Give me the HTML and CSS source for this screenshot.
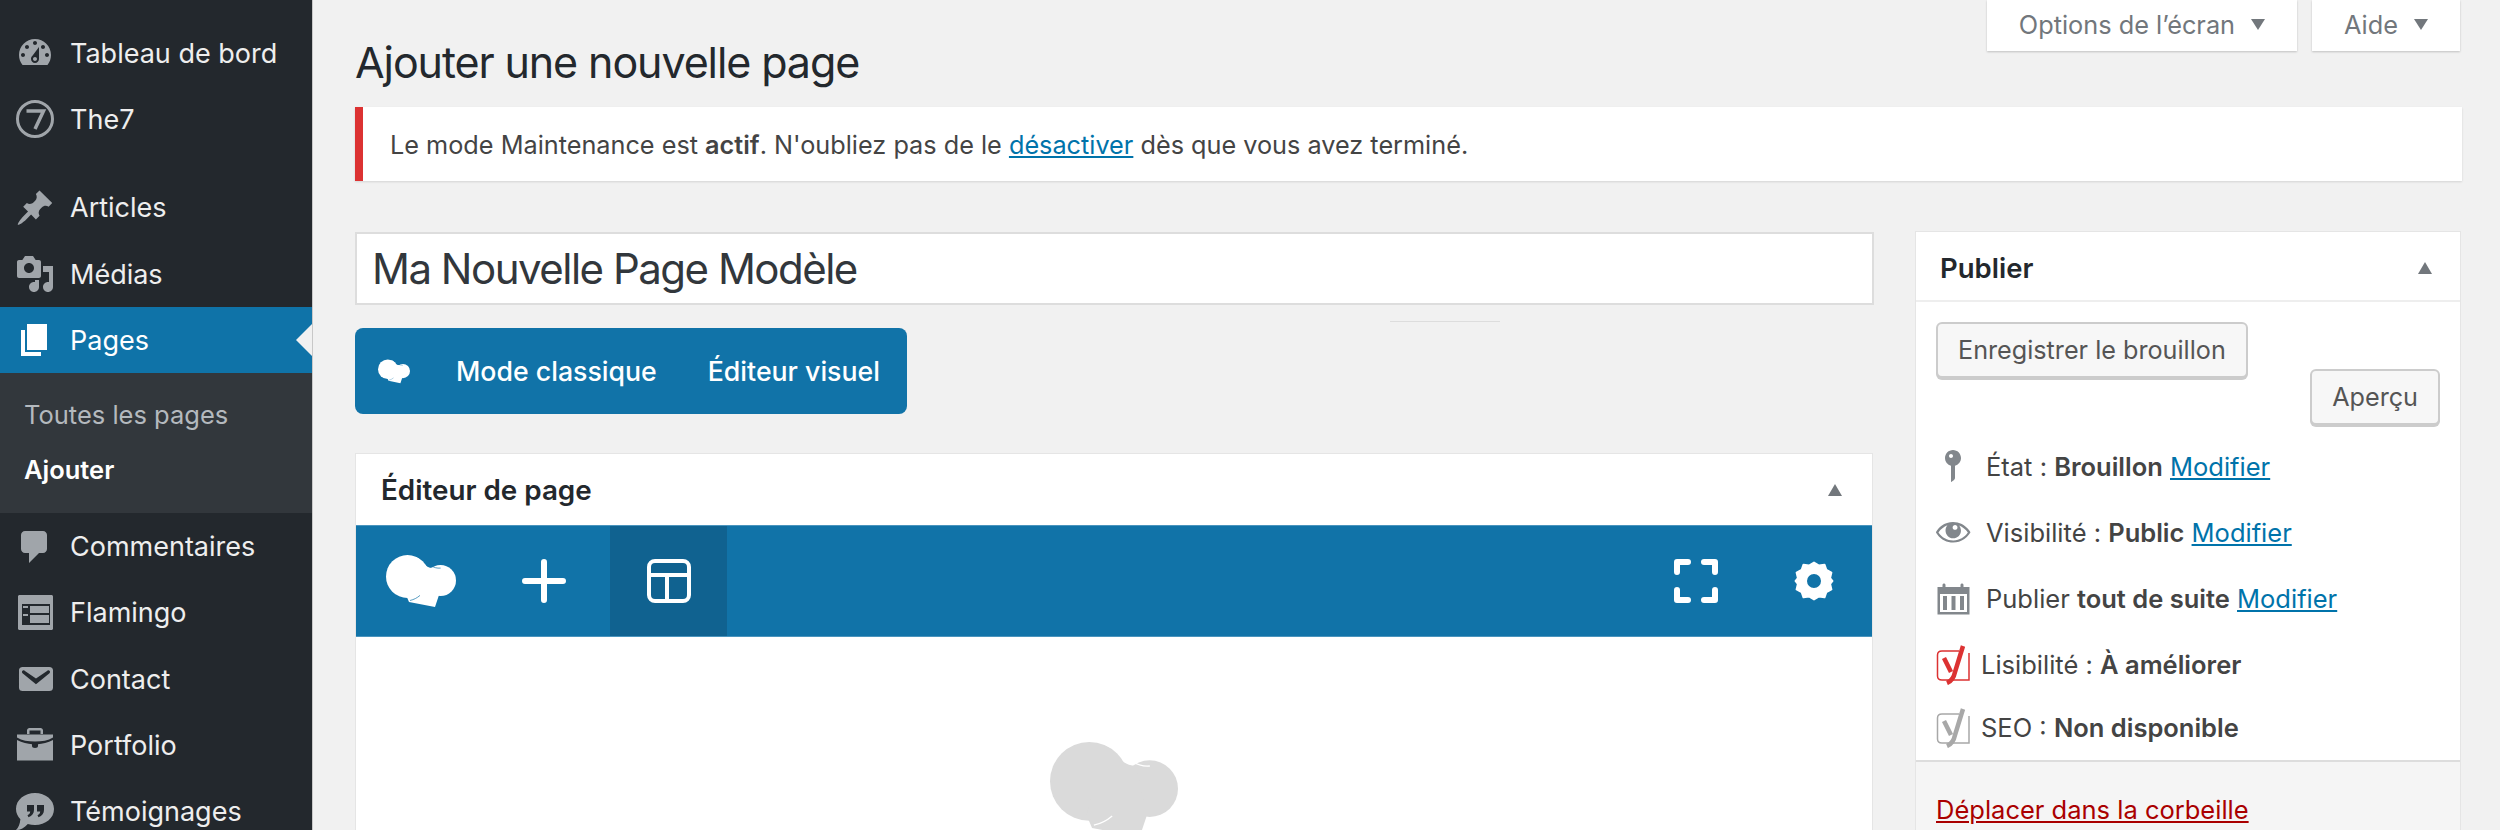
FILE: index.html
```html
<!DOCTYPE html>
<html lang="fr">
<head>
    <meta charset="UTF-8">
    <title>Ajouter une nouvelle page</title>
    <link rel="stylesheet" href="styles.css">
</head>
<body>
    <svg class="defs" width="0" height="0">
        <symbol id="hat" viewBox="0 0 70 53">
            <circle cx="21.5" cy="21.5" r="21.5"/>
            <circle cx="54.5" cy="25.5" r="15.5"/>
            <path d="M30 2C37 5 38 13 47 13L53 40L49 52L23 47L20 40Z"/>
            <path class="notch" d="M45.5 10.8C48 12.6 51 13.4 54.6 13.1"/>
            <path class="notch" d="M24 45.500C28 44.500 31 43 34 40.400"/>
        </symbol>
    </svg>

    <aside class="sidebar">
        <ul class="menu">
            <li class="menu-item">
                <svg class="menu-icon" viewBox="0 0 20 20"><path d="M3.76 16h12.48c1.1-1.37 1.76-3.11 1.76-5 0-4.42-3.58-8-8-8s-8 3.58-8 8c0 1.89.66 3.63 1.76 5zM10 4c.55 0 1 .45 1 1s-.45 1-1 1-1-.45-1-1 .45-1 1-1zM6 6c.55 0 1 .45 1 1s-.45 1-1 1-1-.45-1-1 .45-1 1-1zm8 0c.55 0 1 .45 1 1s-.45 1-1 1-1-.45-1-1 .45-1 1-1zm-5.37 5.55L12 7v6c0 1.1-.9 2-2 2s-2-.9-2-2c0-.57.24-1.08.63-1.45zM4 10c.55 0 1 .45 1 1s-.45 1-1 1-1-.45-1-1 .45-1 1-1zm12 0c.55 0 1 .45 1 1s-.45 1-1 1-1-.45-1-1 .45-1 1-1zm-5 3c0-.55-.45-1-1-1s-1 .45-1 1 .45 1 1 1 1-.45 1-1z" fill-rule="evenodd"/></svg>
                Tableau de bord
            </li>
            <li class="menu-item menu-item-last">
                <svg class="menu-icon" viewBox="0 0 40 40"><circle cx="20" cy="20" r="17.5" fill="none" stroke="currentColor" stroke-width="3"/><path d="M11.5 12h17L20 30" fill="none" stroke="currentColor" stroke-width="3.5"/></svg>
                The7
            </li>
            <li class="menu-item">
                <svg class="menu-icon" viewBox="0 0 20 20"><path d="M10.44 3.02l1.82-1.82 6.36 6.35-1.83 1.82c-1.05-.68-2.48-.57-3.41.36l-.75.75c-.92.93-1.04 2.35-.35 3.41l-1.83 1.82-2.41-2.41-2.8 2.79c-.42.42-3.38 2.71-3.8 2.29s1.86-3.39 2.28-3.81l2.79-2.79L4.1 9.36l1.83-1.82c1.05.69 2.48.57 3.4-.36l.75-.75c.93-.92 1.05-2.35.36-3.41z"/></svg>
                Articles
            </li>
            <li class="menu-item">
                <svg class="menu-icon" viewBox="0 0 20 20"><path d="M13 11V4c0-.55-.45-1-1-1h-1.67L9 1H5L3.67 3H2c-.55 0-1 .45-1 1v7c0 .55.45 1 1 1h10c.55 0 1-.45 1-1zM7 4.5c1.38 0 2.5 1.12 2.5 2.5S8.38 9.5 7 9.5 4.5 8.38 4.5 7 5.62 4.5 7 4.5zM14 6h5v10.5c0 1.38-1.12 2.5-2.5 2.5S14 17.88 14 16.5s1.12-2.5 2.5-2.5c.17 0 .34.02.5.05V9h-3V6zm-4 8.05V13h2v3.5c0 1.38-1.12 2.5-2.5 2.5S7 17.88 7 16.5 8.12 14 9.5 14c.17 0 .34.02.5.05z"/></svg>
                Médias
            </li>
            <li class="menu-item menu-item-active">
                <svg class="menu-icon" viewBox="0 0 20 20"><path d="M6 15V2h10v13H6zm-1 1h8v2H3V5h2v11z"/></svg>
                Pages
            </li>
            <li class="submenu">
                <div class="submenu-link">Toutes les pages</div>
                <div class="submenu-link submenu-link-current">Ajouter</div>
            </li>
            <li class="menu-item">
                <svg class="menu-icon" viewBox="0 0 20 20"><path d="M5 2h9c1.1 0 2 .9 2 2v7c0 1.1-.9 2-2 2h-2l-5 5v-5H5c-1.1 0-2-.9-2-2V4c0-1.1.9-2 2-2z"/></svg>
                Commentaires
            </li>
            <li class="menu-item">
                <svg class="menu-icon" viewBox="0 0 40 40"><path fill-rule="evenodd" d="M4.500 2h32C37.300 2 38 2.700 38 3.500v32c0 .8-.7 1.500-1.500 1.500h-32C3.700 37 3 36.300 3 35.500v-32C3 2.700 3.700 2 4.500 2zM7 11v21h28V11z"/><path d="M8 13h5v2H8zM8 21h5v2H8zM15 13h19v7H15zM15 22h19v8H15z"/></svg>
                Flamingo
            </li>
            <li class="menu-item">
                <svg class="menu-icon" viewBox="0 0 20 20"><path d="M3.87 4h13.25C18.37 4 19 4.59 19 5.79v8.42c0 1.19-.63 1.79-1.88 1.79H3.87c-1.25 0-1.88-.6-1.88-1.79V5.79c0-1.2.63-1.79 1.88-1.79zm6.62 8.6l6.74-5.53c.24-.2.43-.66.13-1.07-.29-.41-.82-.42-1.17-.17l-5.7 3.86L4.8 5.83c-.35-.25-.88-.24-1.17.17-.3.41-.11.87.13 1.07z"/></svg>
                Contact
            </li>
            <li class="menu-item">
                <svg class="menu-icon" viewBox="0 0 40 40"><path d="M12 8V4.500C12 3.100 13.100 2 14.500 2h11C26.900 2 28 3.100 28 4.500V8h-2.500V4.500h-11V8zM2 8.500h36v3c-5 3-11 4-18 4s-13-1-18-4zM2 14c5 2.700 11 3.900 15 4.200V20c0 1 1 2 3 2s3-1 3-2v-1.800c4-.3 10-1.500 15-4.200v20.500H2z"/></svg>
                Portfolio
            </li>
            <li class="menu-item">
                <svg class="menu-icon" viewBox="0 0 40 40"><path fill-rule="evenodd" d="M20 1c10.500 0 19 6.800 19 16s-8.500 16-19 16c-2.500 0-5-.4-7.200-1.100C9.500 35.500 5.500 38 1 38c2.500-2.500 4-6 4.400-10.700C2.700 24.500 1 21 1 17 1 7.800 9.500 1 20 1zM12 13v6.500h3.200c-.1 1.800-.9 3-2.700 3.800l1 2c3.700-1.300 5.500-4 5.500-7.500V13zm10 0v6.500h3.200c-.1 1.800-.9 3-2.700 3.800l1 2c3.700-1.300 5.500-4 5.500-7.500V13z"/></svg>
                Témoignages
            </li>
        </ul>
    </aside>

    <main class="content">
        <div class="screen-meta">
            <div class="meta-tab">Options de l’écran <span class="arrow-down"></span></div>
            <div class="meta-tab">Aide <span class="arrow-down"></span></div>
        </div>

        <h1 class="page-title">Ajouter une nouvelle page</h1>

        <div class="notice">
            <p>Le mode Maintenance est <b>actif</b>. N'oubliez pas de le <a href="#">désactiver</a> dès que vous avez terminé.</p>
        </div>

        <div class="columns">
            <div class="col-main">
                <div class="title-input">Ma Nouvelle Page Modèle</div>
                <div class="title-handle"></div>

                <div class="mode-switch">
                    <svg class="mode-hat"><use href="#hat"/></svg>
                    <span class="mode-label mode-label-first">Mode classique</span>
                    <span class="mode-label">Éditeur visuel</span>
                </div>

                <section class="box editor-box">
                    <div class="box-head">
                        <h2>Éditeur de page</h2>
                        <span class="arrow-up"></span>
                    </div>
                    <div class="toolbar">
                        <div class="tool tool-logo"><svg class="toolbar-hat"><use href="#hat"/></svg></div>
                        <div class="tool tool-add">
                            <svg width="44" height="44" viewBox="0 0 44 44"><path d="M22 3v38M3 22h38" fill="none" stroke="#fff" stroke-width="6" stroke-linecap="round"/></svg>
                        </div>
                        <div class="tool tool-active">
                            <svg width="44" height="44" viewBox="0 0 44 44" fill="none" stroke="#fff" stroke-width="4"><rect x="2" y="2" width="40" height="40" rx="6"/><path d="M2 16h40M20 16v26"/></svg>
                        </div>
                        <div class="toolbar-right">
                            <svg width="44" height="44" viewBox="0 0 44 44" fill="none" stroke="#fff" stroke-width="6" stroke-linecap="round" stroke-linejoin="round"><path d="M3 13V3h11M30 3h11v10M41 31v10H30M14 41H3V31"/></svg>
                            <svg width="40" height="40" viewBox="0 0 40 40"><path fill="#fff" stroke="#fff" stroke-width="2" stroke-linejoin="round" fill-rule="evenodd" d="M20 1.500l5 3 5.500-.8 1.900 5.300 5 2.600-1.300 5.400L38.500 20l-2.400 3 1.300 5.400-5 2.600-1.900 5.300-5.500-.8-5 3-5-3-5.500.8-1.900-5.300-5-2.600 1.300-5.400L1.500 20l2.400-3-1.300-5.400 5-2.600 1.900-5.300 5.500.8zM20 12a8 8 0 1 0 0 16 8 8 0 0 0 0-16z"/></svg>
                        </div>
                    </div>
                    <div class="editor-empty">
                        <svg class="empty-hat"><use href="#hat"/></svg>
                    </div>
                </section>
            </div>

            <section class="box publish-box">
                <div class="box-head publish-head">
                    <h2>Publier</h2>
                    <span class="arrow-up"></span>
                </div>
                <div class="publish-actions">
                    <button type="button" class="btn">Enregistrer le brouillon</button>
                    <button type="button" class="btn btn-preview">Aperçu</button>
                </div>
                <div class="publish-row">
                    <svg class="row-icon" viewBox="1.500 0 20 20"><path fill-rule="evenodd" d="M14 6c0 1.860-1.280 3.410-3 3.860V16c0 1-2 2-2 2V9.860c-1.720-.45-3-2-3-3.860 0-2.210 1.790-4 4-4s4 1.790 4 4zM8 5c0 .55.45 1 1 1s1-.45 1-1-.45-1-1-1-1 .45-1 1z"/></svg>
                    <span>État : <b>Brouillon</b> <a href="#">Modifier</a></span>
                </div>
                <div class="publish-row">
                    <svg class="row-icon" viewBox="1 0 21 21"><path d="M18.300 9.500C15 4.900 8.500 3.800 3.900 7.200c-1.200.9-2.200 2.100-3 3.400.2.4.5.8.8 1.200 3.300 4.600 9.600 5.600 14.200 2.400.9-.7 1.700-1.400 2.400-2.400.3-.4.5-.8.8-1.200-.3-.4-.5-.8-.8-1.100zm-8.200-2.300c.5-.5 1.300-.5 1.800 0s.5 1.300 0 1.800-1.300.5-1.800 0-.5-1.300 0-1.800zm-.1 7.700c-3.100 0-6-1.600-7.700-4.200C3.500 9 5.100 7.800 7 7c-.7.8-1 1.700-1 2.700 0 2.200 1.700 4.100 4 4.100 2.200 0 4.100-1.700 4.100-4 0-1-.4-2-1-2.700 1.900.8 3.500 2 4.600 3.700-1.700 2.600-4.600 4.200-7.700 4.100z"/></svg>
                    <span>Visibilité : <b>Public</b> <a href="#">Modifier</a></span>
                </div>
                <div class="publish-row">
                    <svg class="row-icon" viewBox="0 0 40 40"><path fill-rule="evenodd" d="M1.500 8h5V6c0-1 .8-1.500 1.500-1.500S9.500 5 9.500 6v2h15V6c0-1 .8-1.500 1.500-1.500S27.500 5 27.500 6v2h6v27.500h-32zM4 15v18h27V15zM7 17h4v14H7zM15.500 17h4v14h-4zM24 17h4v14h-4z"/></svg>
                    <span>Publier <b>tout de suite</b> <a href="#">Modifier</a></span>
                </div>
                <div class="publish-row publish-row-seo publish-row-lis">
                    <svg class="yoast yoast-red" viewBox="0 0 34 40"><path class="yoast-box" d="M23 6H6C3 6 1.500 8 1.500 10v21c0 2 1.500 4 4.500 4h27V8"/><path class="yoast-y" d="M8 13l7 14M27 1l-8 26c-1 5-3 9-8 11"/></svg>
                    <span>Lisibilité : <b>À améliorer</b></span>
                </div>
                <div class="publish-row publish-row-seo">
                    <svg class="yoast yoast-grey" viewBox="0 0 34 40"><path class="yoast-box" d="M23 6H6C3 6 1.500 8 1.500 10v21c0 2 1.500 4 4.500 4h27V8"/><path class="yoast-y" d="M8 13l7 14M27 1l-8 26c-1 5-3 9-8 11"/></svg>
                    <span>SEO : <b>Non disponible</b></span>
                </div>
                <div class="publish-footer">
                    <a href="#" class="trash-link">Déplacer dans la corbeille</a>
                </div>
            </section>
        </div>
    </main>
</body>
</html>
```

FILE: styles.css
```css
html, body {
    margin: 0;
    height: 830px;
    overflow: hidden;
}
body {
    display: flex;
    font-family: Inter, "Noto Sans", sans-serif;
    font-size: 25.500px;
    color: #444;
    background-color: #f1f1f1;
}
.defs {
    display: block;
    position: absolute;
}
.notch {
    fill: none;
    stroke: var(--notch);
    stroke-width: 0.7;
}
a {
    color: #0073aa;
}

/* sidebar */
.sidebar {
    width: 312px;
    flex-shrink: 0;
    background-color: #23282d;
    border-right: 1px solid #c8c8c8;
}
.menu {
    list-style: none;
    margin: 0;
    padding: 20px 0 0;
}
.menu-item {
    display: flex;
    align-items: center;
    height: 66.300px;
    padding-left: 15px;
    color: #eee;
    font-size: 27px;
}
.menu-item-last {
    margin-bottom: 22px;
}
.menu-icon {
    width: 40px;
    height: 40px;
    margin-right: 15px;
    fill: #a0a5aa;
    color: #a0a5aa;
    flex-shrink: 0;
}
.menu-item-active {
    position: relative;
    background-color: #0f73a8;
    color: #fff;
}
.menu-item-active .menu-icon {
    fill: #fff;
}
.menu-item-active::after {
    content: "";
    position: absolute;
    right: 0;
    top: 50%;
    margin-top: -16px;
    border: 16px solid transparent;
    border-right-color: #f1f1f1;
    border-left-width: 0;
}
.submenu {
    height: 140px;
    padding-top: 14px;
    box-sizing: border-box;
    background-color: #32373c;
}
.submenu-link {
    height: 55px;
    line-height: 55px;
    padding-left: 24px;
    font-size: 25.500px;
    color: #b4b9be;
}
.submenu-link-current {
    color: #fff;
    font-weight: 600;
}

/* main column */
.content {
    flex: 1;
    min-width: 0;
    padding: 0 38px 0 42px;
}
.screen-meta {
    display: flex;
    justify-content: flex-end;
    gap: 15px;
    padding-right: 2px;
}
.meta-tab {
    display: flex;
    align-items: center;
    height: 49px;
    padding: 0 32px 2px;
    background: #fff;
    color: #72777c;
    font-size: 25.300px;
    box-shadow: 0 1px 2px rgba(0, 0, 0, 0.2);
}
.arrow-down {
    margin-left: 16px;
    border-style: solid;
    border-width: 11px 7.500px 0;
    border-color: #72777c transparent transparent;
}
.arrow-up {
    border-style: solid;
    border-width: 0 7.500px 12px;
    border-color: transparent transparent #72777c;
}
.page-title {
    margin: 0;
    height: 56px;
    line-height: 22px;
    font-size: 43px;
    font-weight: 400;
    letter-spacing: -1.100px;
    color: #23282d;
}
.notice {
    display: flex;
    align-items: center;
    height: 74px;
    padding: 2px 0 0 27px;
    box-sizing: border-box;
    background: #fff;
    border-left: 8px solid #dc3232;
    box-shadow: 0 1px 2px rgba(0, 0, 0, 0.12);
    margin-bottom: 51px;
    font-size: 25.250px;
}
.notice p {
    margin: 0;
}
.notice b {
    font-weight: 600;
}
.columns {
    display: grid;
    grid-template-columns: 1519px 544px;
    gap: 42px;
    align-items: start;
}
.title-input {
    height: 73px;
    line-height: 69px;
    padding-left: 15px;
    box-sizing: border-box;
    background: #fff;
    border: 2px solid #ddd;
    font-size: 42px;
    letter-spacing: -1.500px;
    color: #32373c;
}
.title-handle {
    width: 110px;
    height: 1px;
    margin: 16px 0 0 1035px;
    background-color: #ddd;
}
.mode-switch {
    display: flex;
    align-items: center;
    width: 552px;
    height: 86px;
    margin-top: 6px;
    background-color: #1173a8;
    border-radius: 8px;
    color: #fff;
    font-size: 26.700px;
    font-weight: 500;
}
.mode-hat {
    --notch: #1173a8;
    width: 32px;
    height: 25px;
    margin-left: 23px;
    fill: #fff;
}
.mode-label {
    margin-left: 51px;
}
.mode-label-first {
    margin-left: 46px;
}
.box {
    background: #fff;
    box-shadow: 0 0 0 1px #e5e5e5;
}
.box-head {
    display: flex;
    align-items: center;
    justify-content: space-between;
    height: 71px;
    padding: 0 30px 0 25px;
}
.box-head h2 {
    margin: 0;
    font-size: 27.800px;
    font-weight: 600;
    color: #23282d;
}
.editor-box {
    margin: 40px 2px 0 1px;
}
.toolbar {
    display: flex;
    height: 112px;
    background-color: #1173a8;
    border-top: 1px solid #4a94bd;
    border-bottom: 1px solid #4a94bd;
    box-sizing: border-box;
}
.tool {
    display: flex;
    align-items: center;
    justify-content: center;
}
.tool-logo {
    width: 121px;
    justify-content: flex-start;
    padding-left: 30px;
    box-sizing: border-box;
}
.toolbar-hat {
    --notch: #1173a8;
    width: 70px;
    height: 53px;
    fill: #fff;
}
.tool-add {
    width: 133px;
}
.tool-active {
    width: 117px;
    background-color: #106290;
}
.toolbar-right {
    display: flex;
    align-items: center;
    gap: 76px;
    margin-left: auto;
    padding-right: 38px;
}
.editor-empty {
    display: flex;
    justify-content: center;
    padding-top: 105px;
    height: 200px;
}
.empty-hat {
    --notch: #fff;
    width: 128px;
    height: 97px;
    fill: #dadada;
}

/* publish box */
.publish-head {
    height: 70px;
    padding: 4px 28px 0 24px;
    box-sizing: border-box;
    border-bottom: 2px solid #eee;
}
.publish-head h2 {
    font-size: 27.500px;
}
.publish-actions {
    padding: 20px 20px 0;
}
.btn {
    display: block;
    height: 56px;
    padding: 0 20px;
    background: #f7f7f7;
    border: 2px solid #ccc;
    border-radius: 6px;
    box-shadow: 0 2px 0 #ccc;
    font-family: inherit;
    font-size: 25.200px;
    color: #555;
}
.btn-preview {
    margin: -9px 0 0 auto;
}
.publish-row {
    display: flex;
    align-items: center;
    height: 66.300px;
    padding-left: 20px;
    box-sizing: border-box;
}
.publish-row:nth-of-type(3) {
    margin-top: 8px;
}
.row-icon {
    width: 40px;
    height: 40px;
    margin-right: 10px;
    fill: #82878c;
}
.publish-row b {
    font-weight: 600;
}
.publish-row-seo {
    height: 64px;
}
.publish-row-lis {
    padding-top: 2px;
}
.yoast {
    width: 34px;
    height: 40px;
    margin-right: 11px;
    fill: none;
}
.yoast-box {
    stroke-width: 1.500;
}
.yoast-y {
    stroke-width: 4.500;
}
.yoast-red .yoast-box, .yoast-red .yoast-y {
    stroke: #dc3232;
}
.yoast-grey .yoast-box, .yoast-grey .yoast-y {
    stroke: #a8a8a8;
}
.publish-footer {
    height: 80px;
    padding: 32px 20px 0;
    box-sizing: border-box;
    background-color: #f5f5f5;
    border-top: 2px solid #ddd;
}
.trash-link {
    color: #a00;
}
```
